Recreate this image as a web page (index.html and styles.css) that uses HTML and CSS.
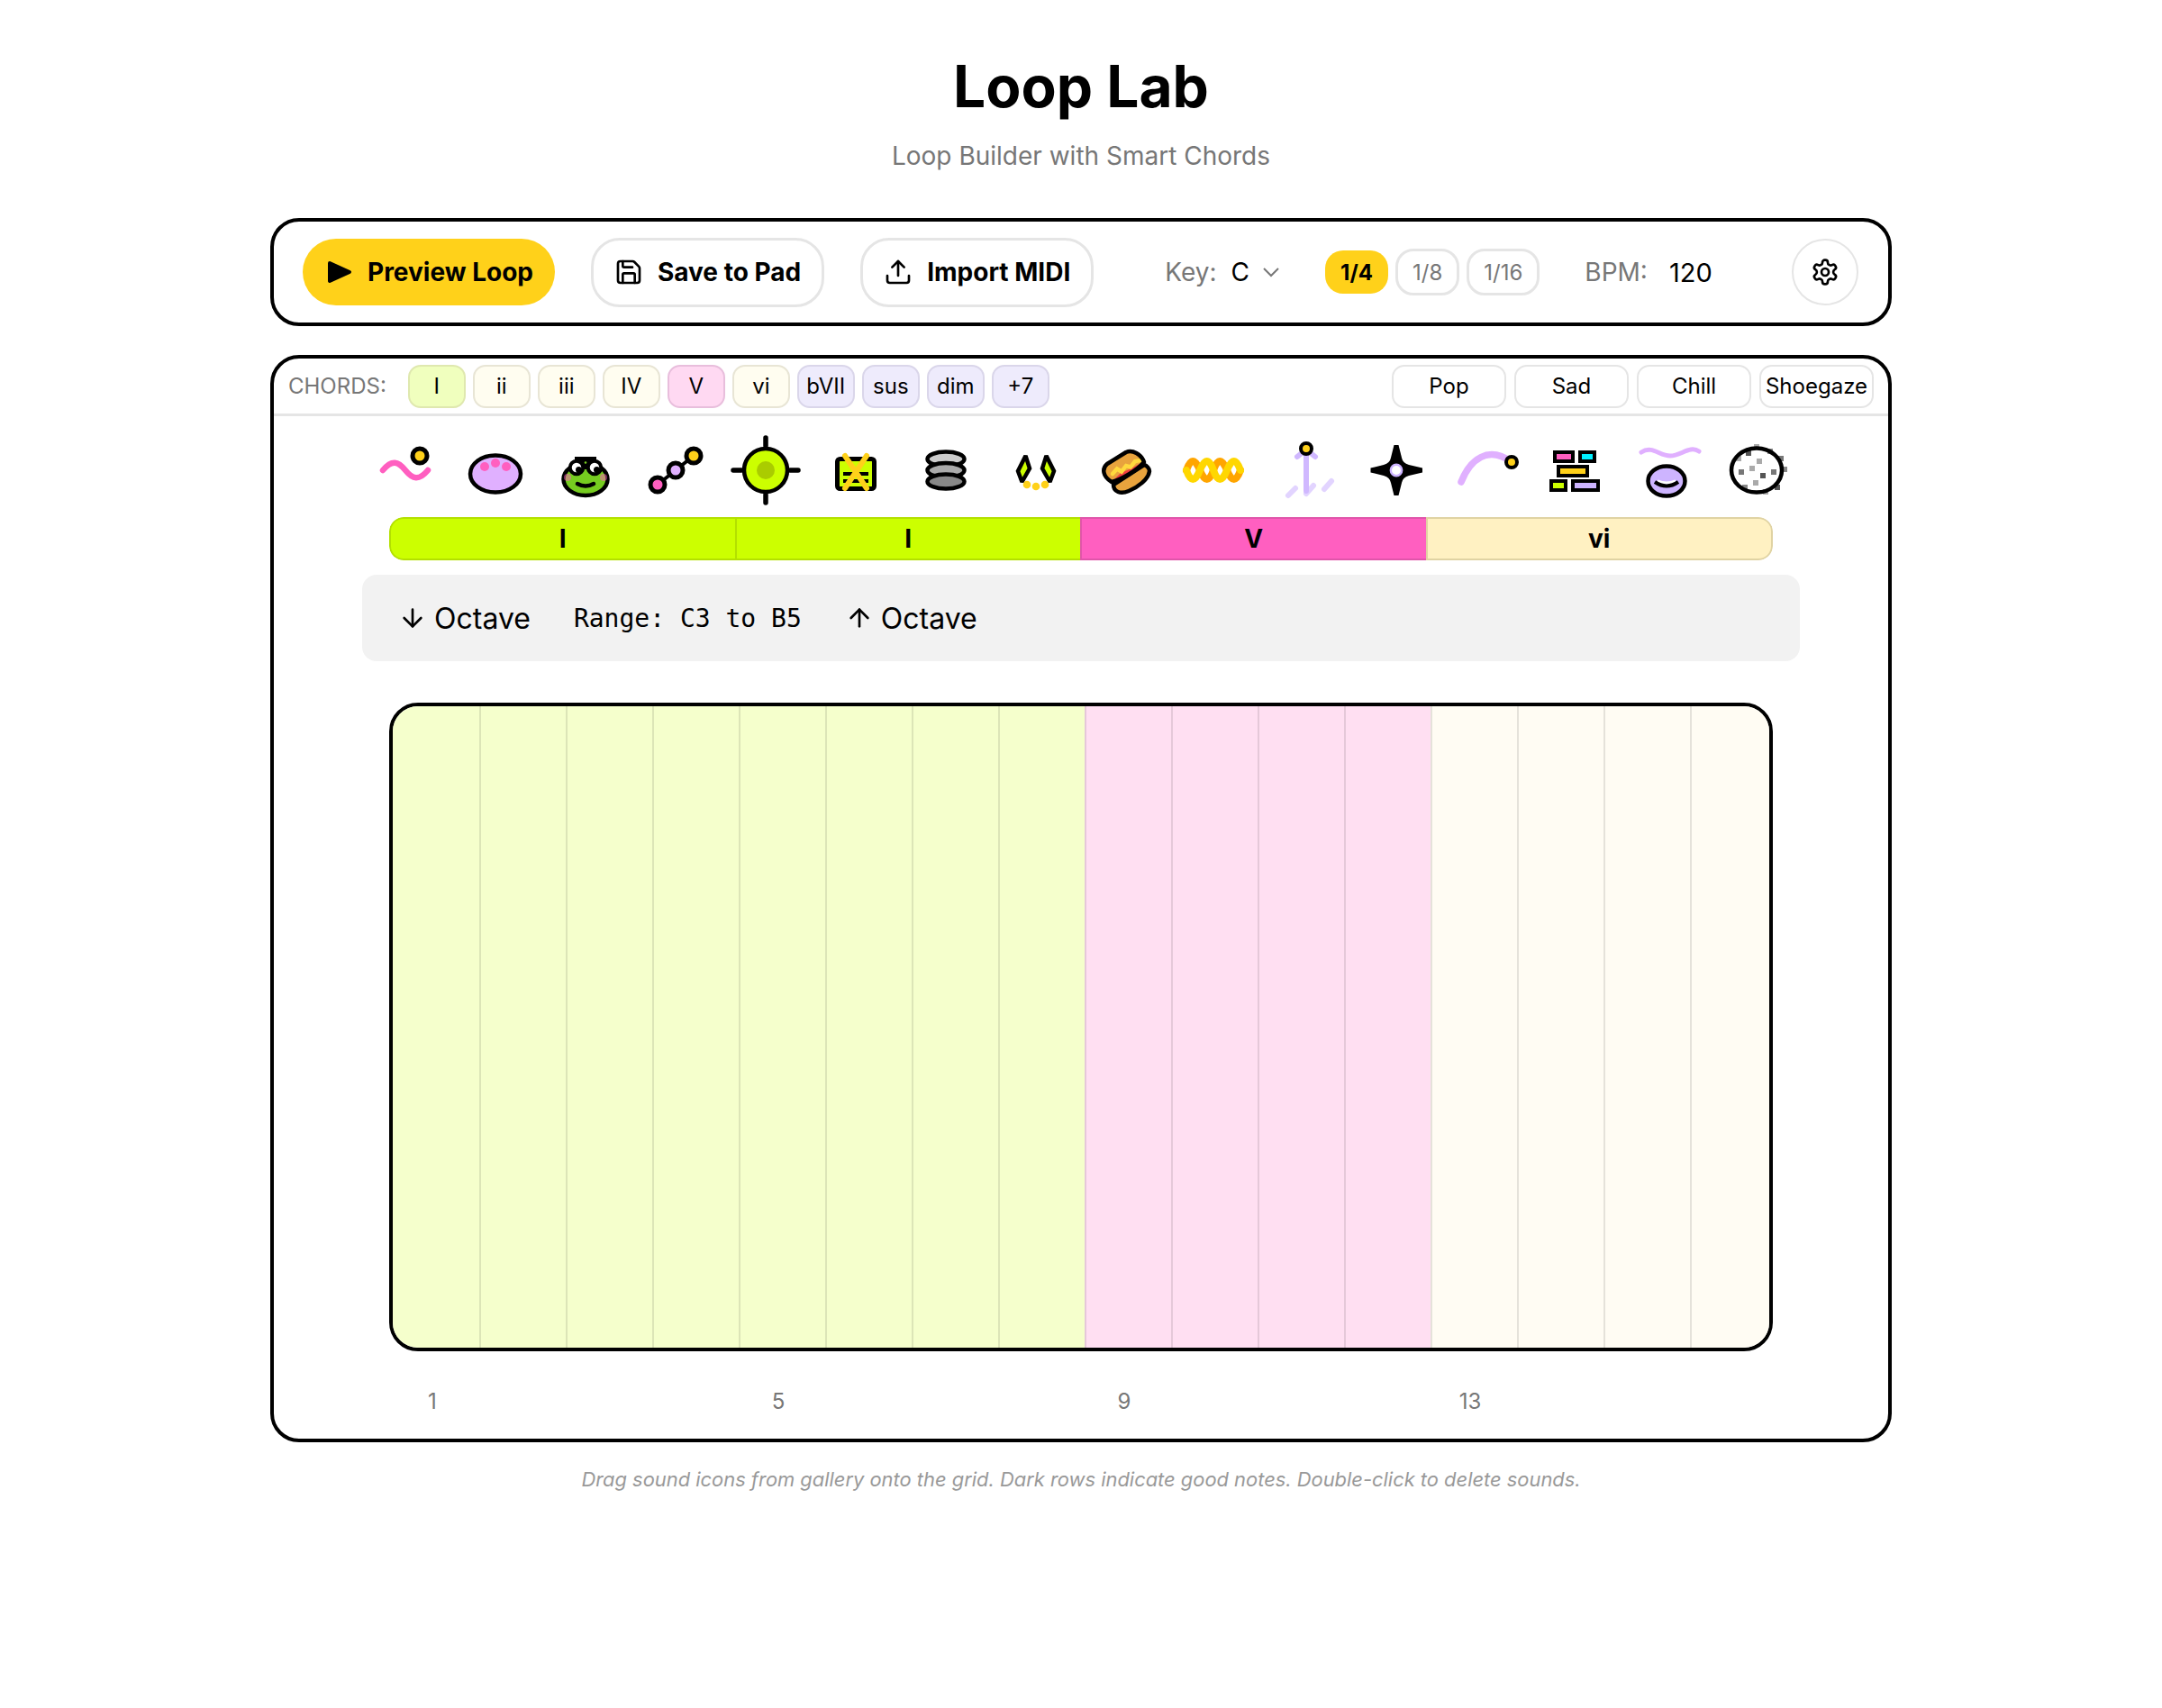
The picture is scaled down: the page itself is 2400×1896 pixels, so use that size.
FILE: index.html
```html
<!DOCTYPE html>
<html lang="en">

<head>
    <meta charset="UTF-8">
    <title>Loop Lab</title>
    <link rel="stylesheet" href="styles.css">
</head>

<body>
    <div class="page">
        <h1 class="title">Loop Lab</h1>
        <p class="subtitle">Loop Builder with Smart Chords</p>

        <div class="toolbar">
            <button class="btn btn-play">
                <svg class="lucide" viewBox="0 0 32 32"><polygon points="6,6 28,16 6,26" fill="#000" stroke="#000" stroke-width="4" stroke-linejoin="round"/></svg>
                Preview Loop
            </button>
            <button class="btn">
                <svg class="lucide" viewBox="0 0 24 24"><path d="M15.2 3a2 2 0 0 1 1.4.6l3.8 3.8a2 2 0 0 1 .6 1.4V19a2 2 0 0 1-2 2H5a2 2 0 0 1-2-2V5a2 2 0 0 1 2-2z"/><path d="M17 21v-7a1 1 0 0 0-1-1H8a1 1 0 0 0-1 1v7"/><path d="M7 3v4a1 1 0 0 0 1 1h7"/></svg>
                Save to Pad
            </button>
            <button class="btn">
                <svg class="lucide" viewBox="0 0 24 24"><path d="M21 15v4a2 2 0 0 1-2 2H5a2 2 0 0 1-2-2v-4"/><polyline points="17 8 12 3 7 8"/><line x1="12" y1="3" x2="12" y2="15"/></svg>
                Import MIDI
            </button>
            <div class="key">
                <span class="muted">Key:</span>
                <span class="value">C</span>
                <svg class="chevron" viewBox="0 0 24 24"><path d="m6 9 6 6 6-6"/></svg>
            </div>
            <div class="durations">
                <span class="dur dur-on">1/4</span>
                <span class="dur">1/8</span>
                <span class="dur">1/16</span>
            </div>
            <div class="bpm">
                <span class="muted">BPM:</span>
                <span class="value">120</span>
            </div>
            <button class="gear">
                <svg class="lucide" viewBox="0 0 24 24"><path d="M12.22 2h-.44a2 2 0 0 0-2 2v.18a2 2 0 0 1-1 1.73l-.43.25a2 2 0 0 1-2 0l-.15-.08a2 2 0 0 0-2.73.73l-.22.38a2 2 0 0 0 .73 2.73l.15.1a2 2 0 0 1 1 1.72v.51a2 2 0 0 1-1 1.74l-.15.09a2 2 0 0 0-.73 2.73l.22.38a2 2 0 0 0 2.73.73l.15-.08a2 2 0 0 1 2 0l.43.25a2 2 0 0 1 1 1.73V20a2 2 0 0 0 2 2h.44a2 2 0 0 0 2-2v-.18a2 2 0 0 1 1-1.73l.43-.25a2 2 0 0 1 2 0l.15.08a2 2 0 0 0 2.73-.73l.22-.39a2 2 0 0 0-.73-2.73l-.15-.08a2 2 0 0 1-1-1.74v-.5a2 2 0 0 1 1-1.74l.15-.09a2 2 0 0 0 .73-2.73l-.22-.38a2 2 0 0 0-2.73-.73l-.15.08a2 2 0 0 1-2 0l-.43-.25a2 2 0 0 1-1-1.73V4a2 2 0 0 0-2-2z"/><circle cx="12" cy="12" r="3"/></svg>
            </button>
        </div>

        <div class="panel">
            <div class="chord-row">
                <span class="chord-label">CHORDS:</span>
                <span class="chip chip-lime">I</span>
                <span class="chip chip-cream">ii</span>
                <span class="chip chip-cream">iii</span>
                <span class="chip chip-cream">IV</span>
                <span class="chip chip-pink">V</span>
                <span class="chip chip-cream">vi</span>
                <span class="chip chip-violet">bVII</span>
                <span class="chip chip-violet">sus</span>
                <span class="chip chip-violet">dim</span>
                <span class="chip chip-violet">+7</span>
                <div class="styles">
                    <span class="style-btn">Pop</span>
                    <span class="style-btn">Sad</span>
                    <span class="style-btn">Chill</span>
                    <span class="style-btn">Shoegaze</span>
                </div>
            </div>

            <div class="gallery">
                <!-- wave -->
                <svg class="sound" viewBox="0 0 80 80"><path d="M15 40C25 28 32 30 40 40S55 52 65 40" fill="none" stroke="#ff5fc0" stroke-width="6.5" stroke-linecap="round"/><circle cx="56" cy="24" r="8" fill="#ffd11a" stroke="#000" stroke-width="5"/></svg>
                <!-- blob -->
                <svg class="sound" viewBox="0 0 80 80"><ellipse cx="40" cy="44" rx="28" ry="20.5" fill="#e0b0ff" stroke="#000" stroke-width="4.5"/><circle cx="28" cy="36" r="5" fill="#ff5fc0"/><circle cx="40" cy="32" r="5" fill="#ff5fc0"/><circle cx="52" cy="36" r="5" fill="#ff5fc0"/></svg>
                <!-- frog -->
                <svg class="sound" viewBox="0 0 80 80"><ellipse cx="40" cy="50" rx="24.5" ry="18" fill="#76cc20" stroke="#000" stroke-width="4.5"/><path d="M28 27.5H52" stroke="#000" stroke-width="5"/><rect x="36" y="27" width="8" height="12"/><circle cx="20" cy="48" r="4" fill="#ff5fc0" opacity=".5"/><circle cx="60" cy="48" r="4" fill="#ff5fc0" opacity=".5"/><circle cx="30" cy="37" r="7.25" fill="#fff" stroke="#000" stroke-width="4"/><circle cx="50" cy="37" r="7.25" fill="#fff" stroke="#000" stroke-width="4"/><circle cx="32.5" cy="39.5" r="3.5"/><circle cx="52.5" cy="39.5" r="3.5"/><circle cx="40" cy="31.5" r="1.3" fill="#76cc20"/><path d="M31 55Q40 60 49 55" fill="none" stroke="#000" stroke-width="4.5" stroke-linecap="round"/></svg>
                <!-- chain -->
                <svg class="sound" viewBox="0 0 80 80"><path d="M20 56L60 24" stroke="#000" stroke-width="4"/><circle cx="20" cy="56" r="8" fill="#ff5fc0" stroke="#000" stroke-width="5"/><circle cx="40" cy="40" r="8" fill="#e0b0ff" stroke="#000" stroke-width="5"/><circle cx="60" cy="24" r="8" fill="#ffd11a" stroke="#000" stroke-width="5"/></svg>
                <!-- target -->
                <svg class="sound" viewBox="0 0 80 80"><g stroke="#000" stroke-width="5.5" stroke-linecap="round"><path d="M40 4V13M40 67V76M4 40H13M67 40H76"/></g><circle cx="40" cy="40" r="24" fill="#ccff00" stroke="#000" stroke-width="4.5"/><circle cx="40" cy="40" r="10" fill="#aacc00"/></svg>
                <!-- crossed card -->
                <svg class="sound" viewBox="0 0 80 80"><rect x="19.5" y="27.5" width="41" height="33" rx="3" fill="#ccff00" stroke="#000" stroke-width="5"/><path d="M26 44H54M26 52H54" stroke="#000" stroke-width="4"/><path d="M28 24L52 60M52 24L28 60" stroke="#ffd11a" stroke-width="6" stroke-linecap="round"/></svg>
                <!-- stack -->
                <svg class="sound" viewBox="0 0 80 80"><ellipse cx="40" cy="27.5" rx="20.5" ry="8" fill="#ccc" stroke="#000" stroke-width="4.5"/><ellipse cx="40" cy="40" rx="20.5" ry="8" fill="#aaa" stroke="#000" stroke-width="4.5"/><ellipse cx="40" cy="52.5" rx="20.5" ry="8" fill="#888" stroke="#000" stroke-width="4.5"/></svg>
                <!-- leaves -->
                <svg class="sound" viewBox="0 0 80 80"><polygon points="28.5,24 33,38 24.5,53 20,41" fill="#ccff00" stroke="#000" stroke-width="4.5" stroke-miterlimit="2"/><polygon points="51.5,24 47,38 55.5,53 60,41" fill="#ccff00" stroke="#000" stroke-width="4.5" stroke-miterlimit="2"/><circle cx="30" cy="56" r="4.3" fill="#ffd11a"/><circle cx="40" cy="58" r="4.3" fill="#ffd11a"/><circle cx="50" cy="56" r="4.3" fill="#ffd11a"/></svg>
                <!-- burger -->
                <svg class="sound" viewBox="0 0 80 80"><path d="M26 56C26 64 34 67 43 63C53 59 65 50 66 41C66 38 63 35 60 34Z" fill="#e8a33d" stroke="#000" stroke-width="4.5" stroke-linejoin="round"/><path d="M24 53C14 47 13 38 19 33L40 20C47 17 57 22 60 31C52 40 36 50 24 53Z" fill="#e8a33d"/><path d="M27 50L34 43L46 38L58 31L55 38L40 46L30 51Z" fill="#f04040"/><path d="M25 44L30 38.5L35 41.5L40 35L45 36.5L50 30L56 29" fill="none" stroke="#ffd93d" stroke-width="4.5" stroke-linecap="round"/><path d="M24 53C14 47 13 38 19 33L40 20C47 17 57 22 60 31C52 40 36 50 24 53Z" fill="none" stroke="#000" stroke-width="4.5" stroke-linejoin="round"/></svg>
                <!-- coil -->
                <svg class="sound" viewBox="0 0 80 80"><path d="M7 40Q14 20 22 40T37 40T52 40T67 40" fill="none" stroke="#ffa500" stroke-width="8" stroke-linecap="round"/><path d="M7 40Q14 60 22 40T37 40T52 40T67 40" fill="none" stroke="#ffd700" stroke-width="8" stroke-linecap="round"/></svg>
                <!-- arrow -->
                <svg class="sound" viewBox="0 0 80 80"><path d="M20 68L28 60M40 66L48 57M60 61L68 52" stroke="#d0b8ff" stroke-width="6" stroke-linecap="round" opacity=".6"/><path d="M40 20V63M30 25L40 17L50 25" fill="none" stroke="#d0b8ff" stroke-width="6" stroke-linecap="round"/><circle cx="40" cy="16" r="6" fill="#ffd11a" stroke="#000" stroke-width="4"/></svg>
                <!-- sparkle -->
                <svg class="sound" viewBox="0 0 80 80"><path d="M37.5 12H42.5L46 26Q47 32 54 34L69 37.5V42.5L54 46Q47 48 46 54L42.5 68H37.5L34 54Q33 48 26 46L11.5 42.5V37.5L26 34Q33 32 34 26Z"/><circle cx="40" cy="40" r="6.2" fill="#fff" stroke="#cdb4ff" stroke-width="2.4"/></svg>
                <!-- arc -->
                <svg class="sound" viewBox="0 0 80 80"><path d="M12 53C22 28 42 12 68 31" fill="none" stroke="#e0b0ff" stroke-width="7.5" stroke-linecap="round"/><circle cx="68" cy="31" r="6" fill="#ffd11a" stroke="#000" stroke-width="4"/></svg>
                <!-- bricks -->
                <svg class="sound" viewBox="0 0 80 80"><g stroke="#000" stroke-width="4"><rect x="16" y="20" width="20" height="10" fill="#ff5fc0"/><rect x="44" y="20" width="16" height="10" fill="#00f0ff"/><rect x="20" y="36" width="32" height="10" fill="#ffd11a"/><rect x="12" y="52" width="16" height="10" fill="#ccff00"/><rect x="36" y="52" width="28" height="10" fill="#cdb4ff"/></g></svg>
                <!-- lips -->
                <svg class="sound" viewBox="0 0 80 80"><path d="M12 20C24 12 32 24 44 24S66 12 76 19" fill="none" stroke="#e0b0ff" stroke-width="5" stroke-linecap="round"/><ellipse cx="40" cy="52" rx="20.5" ry="16.5" fill="#cdb4ff" stroke="#000" stroke-width="4.5"/><path d="M30 52Q40 56 50 52" fill="none" stroke="#fff" stroke-width="3"/><path d="M27 53Q40 62 53 53" fill="none" stroke="#000" stroke-width="4"/></svg>
                <!-- speckled ball -->
                <svg class="sound" viewBox="0 0 80 80"><g fill="#aaa"><rect x="28" y="18" width="6" height="6" fill="#555"/><rect x="40" y="27" width="6" height="6"/><rect x="32" y="35" width="6" height="6"/><rect x="20" y="39" width="6" height="6" fill="#777"/><rect x="56" y="39" width="6" height="6" fill="#777"/><rect x="44" y="43" width="6" height="6" fill="#555"/><rect x="36" y="51" width="6" height="6"/><rect x="64" y="24" width="6" height="6" fill="#777"/><rect x="68" y="36" width="6" height="6" fill="#888"/><rect x="60" y="56" width="6" height="6" fill="#555"/><rect x="52" y="16" width="6" height="6" fill="#888"/><rect x="24" y="56" width="6" height="6" fill="#888"/><rect x="17" y="24" width="6" height="6"/><rect x="37" y="11" width="6" height="6"/><rect x="47" y="61" width="6" height="6"/></g><ellipse cx="40" cy="40" rx="28" ry="24.5" fill="none" stroke="#000" stroke-width="4.5"/></svg>
            </div>

            <div class="bars">
                <div class="bar bar-lime">I</div>
                <div class="bar bar-lime">I</div>
                <div class="bar bar-pink">V</div>
                <div class="bar bar-cream">vi</div>
            </div>

            <div class="octaves">
                <button class="oct-btn">
                    <svg class="lucide" viewBox="0 0 24 24"><path d="M12 5v14"/><path d="m19 12-7 7-7-7"/></svg>
                    Octave
                </button>
                <span class="range">Range: C3 to B5</span>
                <button class="oct-btn">
                    <svg class="lucide" viewBox="0 0 24 24"><path d="m5 12 7-7 7 7"/><path d="M12 19V5"/></svg>
                    Octave
                </button>
            </div>

            <div class="grid">
                <div class="cell cell-lime"></div><div class="cell cell-lime"></div><div class="cell cell-lime"></div><div class="cell cell-lime"></div>
                <div class="cell cell-lime"></div><div class="cell cell-lime"></div><div class="cell cell-lime"></div><div class="cell cell-lime"></div>
                <div class="cell cell-pink"></div><div class="cell cell-pink"></div><div class="cell cell-pink"></div><div class="cell cell-pink"></div>
                <div class="cell cell-cream"></div><div class="cell cell-cream"></div><div class="cell cell-cream"></div><div class="cell cell-cream"></div>
            </div>

            <div class="beats">
                <span>1</span><span></span><span></span><span></span>
                <span>5</span><span></span><span></span><span></span>
                <span>9</span><span></span><span></span><span></span>
                <span>13</span><span></span><span></span><span></span>
            </div>
        </div>

        <p class="hint">Drag sound icons from gallery onto the grid. Dark rows indicate good notes. Double-click to delete sounds.</p>
    </div>
</body>

</html>
```

FILE: styles.css
```css
body {
    margin: 0;
    background: #fff;
    color: #000;
    font-family: Inter, "Liberation Sans", sans-serif;
}

.page {
    width: 1800px;
    margin: 0 auto;
    padding-top: 56px;
}

.title {
    margin: 0;
    text-align: center;
    font-size: 64px;
    line-height: 80px;
    font-weight: 700;
}

.subtitle {
    margin: 17px 0 0;
    text-align: center;
    font-size: 28px;
    line-height: 40px;
    color: #777;
}

/* top toolbar */
.toolbar {
    display: flex;
    align-items: center;
    height: 120px;
    box-sizing: border-box;
    margin-top: 49px;
    padding: 0 32px;
    border: 4px solid #000;
    border-radius: 32px;
    gap: 40px;
}

.lucide {
    width: 32px;
    height: 32px;
    flex: none;
    fill: none;
    stroke: currentColor;
    stroke-width: 2;
    stroke-linecap: round;
    stroke-linejoin: round;
}

.btn {
    display: flex;
    align-items: center;
    gap: 16px;
    height: 77px;
    padding: 0 23px;
    background: #fff;
    border: 3px solid #e5e5e5;
    border-radius: 32px;
    font: 700 28px Inter, sans-serif;
    color: #000;
}

.btn-play {
    height: 74px;
    padding: 0 24px;
    background: #ffd11a;
    border: 0;
    border-radius: 37px;
}

.muted {
    color: #777;
}

.key {
    display: flex;
    align-items: center;
    gap: 16px;
    margin-left: 39px;
    font-size: 28px;
}

.chevron {
    width: 32px;
    height: 32px;
    margin-left: -8px;
    fill: none;
    stroke: #777;
    stroke-width: 1.5;
}

.durations {
    display: flex;
    align-items: center;
    gap: 8px;
    margin-left: 4px;
}

.dur {
    display: flex;
    align-items: center;
    justify-content: center;
    min-width: 64px;
    height: 52px;
    box-sizing: border-box;
    padding: 0 16px;
    border: 3px solid #e5e5e5;
    border-radius: 20px;
    font-size: 24px;
    color: #777;
}

.dur-on {
    min-width: 70px;
    height: 48px;
    background: #ffd11a;
    border: 0;
    color: #000;
    font-weight: 700;
}

.bpm {
    display: flex;
    align-items: center;
    gap: 24px;
    margin-left: 10px;
    font-size: 28px;
}

.bpm .value {
    font-size: 29px;
}

.gear {
    display: flex;
    align-items: center;
    justify-content: center;
    width: 74px;
    height: 74px;
    margin: 0 1px 0 auto;
    padding: 0;
    background: #fff;
    border: 2px solid #e5e5e5;
    border-radius: 37px;
    color: #000;
}

/* main panel */
.panel {
    height: 1207px;
    box-sizing: border-box;
    margin-top: 32px;
    border: 4px solid #000;
    border-radius: 32px;
}

.chord-row {
    display: flex;
    align-items: center;
    gap: 8px;
    height: 64px;
    box-sizing: border-box;
    padding: 0 16px;
    border-bottom: 3px solid #e5e5e5;
    font-size: 24px;
}

.chord-label {
    margin-right: 16px;
    color: #777;
}

.chip,
.style-btn {
    display: flex;
    align-items: center;
    justify-content: center;
    height: 48px;
    box-sizing: border-box;
    border: 2px solid;
    border-radius: 14px;
}

.chip {
    width: 64px;
}

.chip-lime {
    background: #f0ffbe;
    border-color: #dfe8af;
}

.chip-cream {
    background: #fffdf0;
    border-color: #e8e5d5;
}

.chip-pink {
    background: #ffd9f2;
    border-color: #e8bedc;
}

.chip-violet {
    background: #eeebfc;
    border-color: #dad6ea;
}

.styles {
    display: flex;
    gap: 9px;
    margin-left: auto;
}

.style-btn {
    width: 127px;
    background: #fff;
    border-color: #e5e5e5;
}

.gallery {
    display: flex;
    justify-content: center;
    gap: 20px;
    margin-top: 20px;
}

.sound {
    width: 80px;
    height: 80px;
    flex: none;
}

.bars {
    display: flex;
    width: 1536px;
    margin: 12px auto 0;
    border-radius: 16px;
    overflow: hidden;
}

.bar {
    flex: 1;
    height: 48px;
    box-sizing: border-box;
    border: solid;
    border-width: 2px 0 2px 2px;
    text-align: center;
    font-size: 28px;
    font-weight: 700;
    line-height: 44px;
}

.bar:first-child {
    border-radius: 16px 0 0 16px;
}

.bar:last-child {
    border-right-width: 2px;
    border-radius: 0 16px 16px 0;
}

.bar-lime {
    background: #ccff00;
    border-color: #b3e000;
}

.bar-pink {
    background: #ff5fc0;
    border-color: #e055aa;
}

.bar-cream {
    background: #fff1c2;
    border-color: #e0d3a3;
}

.octaves {
    display: flex;
    align-items: center;
    width: 1596px;
    height: 96px;
    box-sizing: border-box;
    margin: 16px auto 0;
    padding: 0 32px;
    background: #f2f2f2;
    border-radius: 16px;
}

.oct-btn {
    display: flex;
    align-items: center;
    gap: 8px;
    padding: 0 8px;
    background: none;
    border: 0;
    font: 32px Inter, sans-serif;
    color: #000;
}

.range {
    margin: 0 40px;
    font-family: "DejaVu Sans Mono", monospace;
    font-size: 28px;
}

/* piano roll */
.grid {
    display: flex;
    width: 1536px;
    height: 720px;
    box-sizing: border-box;
    margin: 46px auto 0;
    border: 4px solid #000;
    border-radius: 32px;
    overflow: hidden;
}

.cell {
    flex: 0 0 96px;
    box-sizing: border-box;
    border-left: 2px solid rgba(0, 0, 0, .1);
}

.cell:first-child {
    border-left: 0;
}

.cell-lime {
    background: #f5ffcc;
}

.cell-pink {
    background: #ffdff2;
}

.cell-cream {
    background: #fffcf3;
}

.beats {
    display: grid;
    grid-template-columns: repeat(16, 96px);
    width: 1536px;
    margin: 40px auto 0;
    text-align: center;
    font-size: 24px;
    line-height: 32px;
    color: #777;
}

.hint {
    margin: 25px 0 0;
    text-align: center;
    font-size: 21.9px;
    line-height: 32px;
    font-style: italic;
    color: #999;
}
```
